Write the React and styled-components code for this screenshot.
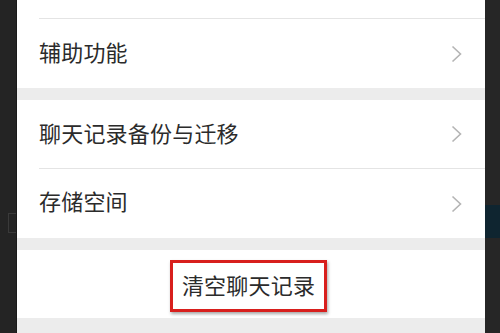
import React from "react";
import styled, { createGlobalStyle } from "styled-components";

const GlobalStyle = createGlobalStyle`
  html, body {
    margin: 0;
    padding: 0;
    background: #232323;
  }
  body {
    font-family: "Noto Sans CJK SC", "Noto Sans", sans-serif;
  }
`;

function Chevron() {
  return (
    <svg width="11" height="18" viewBox="0 0 11 18">
      <polyline
        points="1.5,1.5 9.5,9 1.5,16.5"
        fill="none"
        stroke="#b4b4b4"
        strokeWidth="1.6"
      />
    </svg>
  );
}

function App() {
  return (
    <Screen>
      <GlobalStyle />
      <SideStrip>
        <GhostBox />
      </SideStrip>
      <Panel>
        <TopRest />
        <Group>
          <Row>
            <Label lift={6}>辅助功能</Label>
            <Chevron />
          </Row>
        </Group>
        <Gap />
        <Group>
          <Row divided>
            <Label lift={4}>聊天记录备份与迁移</Label>
            <Chevron />
          </Row>
          <Row>
            <Label lift={7}>存储空间</Label>
            <Chevron />
          </Row>
        </Group>
        <Gap />
        <ClearRow>
          <Highlight>
            <Label lift={5}>清空聊天记录</Label>
          </Highlight>
        </ClearRow>
        <Gap grow />
      </Panel>
      <RightStrip>
        <TealBand />
      </RightStrip>
    </Screen>
  );
}

const Screen = styled.div`
  width: 500px;
  height: 333px;
  display: flex;
  overflow: hidden;
  background: #232323;
`;

const SideStrip = styled.div`
  width: 17px;
  flex-shrink: 0;
  background: #242424;
  border-right: 1px solid #1a1a1a;
  box-sizing: border-box;
  display: flex;
  flex-direction: column;
  padding-top: 213px;
  padding-left: 8px;
`;

const GhostBox = styled.div`
  width: 8px;
  height: 20px;
  border: 1px solid #3a3a3a;
  border-right: none;
  box-sizing: border-box;
`;

const RightStrip = styled.div`
  width: 15px;
  flex-shrink: 0;
  background: #262626;
  display: flex;
  flex-direction: column;
  padding-top: 205px;
`;

const TealBand = styled.div`
  height: 33px;
  background: #0f2530;
`;

const Panel = styled.div`
  width: 468px;
  flex-shrink: 0;
  display: flex;
  flex-direction: column;
  background: #ececec;
`;

const TopRest = styled.div`
  height: 18px;
  background: #fff;
  border-bottom: 1px solid #e4e4e4;
  margin-left: 22px;
  box-shadow: -22px 0 0 #fff;
`;

const Group = styled.div`
  background: #fff;
  display: flex;
  flex-direction: column;
`;

const Row = styled.div`
  height: ${(p) => (p.divided ? "68px" : "69px")};
  display: flex;
  align-items: center;
  justify-content: space-between;
  padding: 0 23px 0 22px;
  border-bottom: ${(p) => (p.divided ? "1px solid #e4e4e4" : "none")};
  margin-left: ${(p) => (p.divided ? "22px" : "0")};
  padding-left: ${(p) => (p.divided ? "0" : "22px")};
`;

const Label = styled.span`
  font-size: 22px;
  line-height: 1;
  color: #2b2b2b;
  letter-spacing: 0.2px;
  margin-bottom: ${(p) => p.lift || 0}px;
`;

const Gap = styled.div`
  height: 12px;
  flex-grow: ${(p) => (p.grow ? 1 : 0)};
  background: #ececec;
`;

const ClearRow = styled.div`
  height: 68px;
  background: #fff;
  display: flex;
  align-items: center;
  justify-content: center;
`;

const Highlight = styled.div`
  width: 157px;
  height: 52px;
  box-sizing: border-box;
  border: 3px solid #d81f1d;
  box-shadow: 1px 2px 3px rgba(0, 0, 0, 0.35);
  display: flex;
  align-items: center;
  justify-content: center;
  margin-right: 5px;
  margin-top: 4px;
`;

export default App;
